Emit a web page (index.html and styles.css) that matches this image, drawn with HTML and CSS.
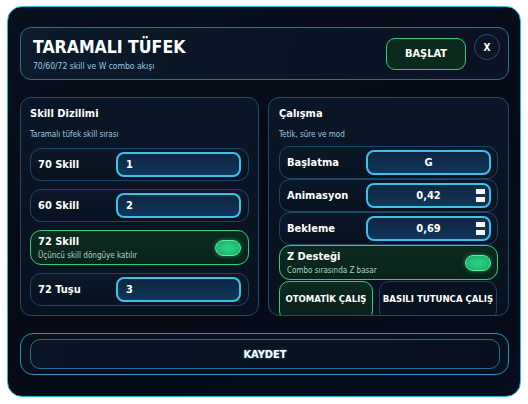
FILE: index.html
```html
<!DOCTYPE html>
<html>

<head>
    <title>Taramalı Tüfek</title>
    <link rel="stylesheet" href="styles.css">
</head>

<body>
    <div class="window">
        <div class="header">
            <div class="header-text">
                <h1>TARAMALI TÜFEK</h1>
                <p>70/60/72 skill ve W combo akışı</p>
            </div>
            <button class="btn-start">BAŞLAT</button>
            <button class="btn-close">X</button>
        </div>

        <div class="panels">
            <div class="panel">
                <h2>Skill Dizilimi</h2>
                <p class="panel-sub">Taramalı tüfek skill sırası</p>
                <div class="rows">
                    <div class="row">
                        <label>70 Skill</label>
                        <div class="field">1</div>
                    </div>
                    <div class="row">
                        <label>60 Skill</label>
                        <div class="field">2</div>
                    </div>
                    <div class="row row-on">
                        <div class="row-text">
                            <label>72 Skill</label>
                            <span>Üçüncü skill döngüye katılır</span>
                        </div>
                        <div class="toggle"></div>
                    </div>
                    <div class="row">
                        <label>72 Tuşu</label>
                        <div class="field">3</div>
                    </div>
                </div>
            </div>

            <div class="panel panel-right">
                <h2>Çalışma</h2>
                <p class="panel-sub">Tetik, süre ve mod</p>
                <div class="rows rows-tight">
                    <div class="row">
                        <label>Başlatma</label>
                        <div class="field center">G</div>
                    </div>
                    <div class="row">
                        <label>Animasyon</label>
                        <div class="field center">0,42<span class="spin"><i></i><i></i></span></div>
                    </div>
                    <div class="row">
                        <label>Bekleme</label>
                        <div class="field center">0,69<span class="spin"><i></i><i></i></span></div>
                    </div>
                    <div class="row row-on">
                        <div class="row-text">
                            <label>Z Desteği</label>
                            <span>Combo sırasında Z basar</span>
                        </div>
                        <div class="toggle"></div>
                    </div>
                    <div class="modes">
                        <button class="mode mode-on">OTOMATİK ÇALIŞ</button>
                        <button class="mode mode-hold">BASILI TUTUNCA ÇALIŞ</button>
                    </div>
                </div>
            </div>
        </div>

        <div class="save-box">
            <button class="btn-save">KAYDET</button>
        </div>
    </div>
</body>

</html>
```

FILE: styles.css
```css
* {
    box-sizing: border-box;
}

body {
    margin: 0;
    background: #ffffff;
    font-family: "DejaVu Sans Condensed", "DejaVu Sans", sans-serif;
    color: #ffffff;
}

button {
    font-family: inherit;
    color: #ffffff;
    cursor: pointer;
}

.window {
    margin: 6px 0 0 7px;
    width: 514px;
    height: 391px;
    border: 1px solid #2fb6dc;
    border-radius: 15px;
    background: linear-gradient(160deg, #07101d 0%, #050a14 60%, #080d1f 100%);
    padding: 20px 11px 0 12px;
}

.header {
    height: 53px;
    border: 1px solid #2b6f93;
    border-radius: 11px;
    background: linear-gradient(100deg, #0b1b2b 0%, #0a1424 60%, #0b1126 100%);
    display: flex;
    align-items: center;
    padding: 0 8px 0 12px;
}

.header-text {
    flex: 1;
}

.header h1 {
    margin: 0;
    font-size: 17.5px;
    line-height: 22px;
    font-weight: bold;
}

.header p {
    margin: 3px 0 0;
    font-size: 8.5px;
    color: #9cc6e6;
}

.btn-start {
    width: 80px;
    height: 32px;
    border: 1px solid #2fc77a;
    border-radius: 9px;
    background: #0a2a1d;
    font-size: 11px;
    font-weight: bold;
    margin-right: 8px;
}

.btn-close {
    width: 26px;
    height: 26px;
    border: 1px solid #2a4b6c;
    border-radius: 50%;
    background: #0a1424;
    font-size: 10px;
    font-weight: bold;
    padding: 0;
    align-self: flex-start;
    margin-top: 6px;
}

.panels {
    margin-top: 17px;
    display: grid;
    grid-template-columns: 239px 241px;
    gap: 9px;
    height: 219px;
}

.panel {
    border: 1px solid #1f4c6e;
    border-radius: 11px;
    background: linear-gradient(180deg, #0a1626 0%, #08111f 100%);
    padding: 9px 9px 0 9px;
    overflow: hidden;
}

.panel-right {
    padding: 9px 10px 0 10px;
}

.panel h2 {
    margin: 0;
    font-size: 11px;
    line-height: 14px;
    font-weight: bold;
}

.panel-sub {
    margin: 8px 0 0;
    font-size: 8px;
    line-height: 11px;
    color: #9cc6e2;
}

.rows {
    margin-top: 8px;
    display: flex;
    flex-direction: column;
    gap: 8px;
}

.rows-tight {
    margin-top: 6px;
    gap: 0;
}

.row {
    height: 33px;
    border: 1px solid #1d4566;
    border-radius: 11px;
    background: linear-gradient(180deg, #0b1829 0%, #081220 100%);
    display: flex;
    align-items: center;
    padding: 0 7px 0 7px;
}

.row label {
    width: 78px;
    font-size: 11px;
    font-weight: bold;
}

.field {
    flex: 1;
    height: 25px;
    border: 2px solid #3cc0ee;
    border-radius: 8px;
    background: linear-gradient(180deg, #0c2640 0%, #11365a 100%);
    font-size: 11px;
    font-weight: bold;
    display: flex;
    align-items: center;
    padding-left: 8px;
    position: relative;
}

.field.center {
    justify-content: center;
    padding-left: 0;
}

.spin {
    position: absolute;
    right: 3px;
    top: 2px;
    bottom: 2px;
    width: 11px;
    background: #16324f;
    display: flex;
    flex-direction: column;
    justify-content: space-around;
    align-items: center;
}

.spin i {
    width: 9px;
    height: 5px;
    background: #f2f6fa;
}

.row-on {
    height: 35px;
    border-color: #2ecf7c;
    background: linear-gradient(180deg, #0b2a1f 0%, #0a2219 100%);
    justify-content: space-between;
}

.row-text {
    display: flex;
    flex-direction: column;
}

.row-text label {
    width: auto;
}

.row-text span {
    margin-top: 3px;
    font-size: 8px;
    color: #a8d6c4;
}

.toggle {
    width: 26px;
    height: 16px;
    border: 1px solid #5ef0a2;
    border-radius: 8px;
    background: radial-gradient(ellipse at center, #2bd088 0%, #22c47a 45%, #1aa862 100%);
    box-shadow: 0 0 4px rgba(46, 207, 124, 0.6);
}

.modes {
    margin-top: 1px;
    display: flex;
    gap: 6px;
}

.mode {
    height: 40px;
    border: 1px solid #223f60;
    border-radius: 10px;
    background: #08111f;
    font-size: 9.5px;
    font-weight: bold;
    white-space: nowrap;
    padding: 0 0 6px;
}

.mode-on {
    width: 94px;
    border-color: #2ecf7c;
    background: linear-gradient(180deg, #0b2a1f 0%, #0a1f1a 100%);
}

.mode-hold {
    width: 118px;
}

.panel-right .row {
    padding-right: 6px;
}

.panel-right .row label {
    width: 79px;
}

.save-box {
    margin-top: 17px;
    height: 42px;
    border: 1px solid #2d8fba;
    border-radius: 13px;
    background: #07101e;
    padding: 5px 8px 5px 9px;
}

.btn-save {
    width: 100%;
    height: 30px;
    border: 1px solid #2a6a93;
    border-radius: 10px;
    background: linear-gradient(90deg, #0a1525 0%, #08101e 100%);
    font-size: 11px;
    font-weight: bold;
    text-shadow: 0 0 2px rgba(80, 200, 240, 0.6);
}
```
